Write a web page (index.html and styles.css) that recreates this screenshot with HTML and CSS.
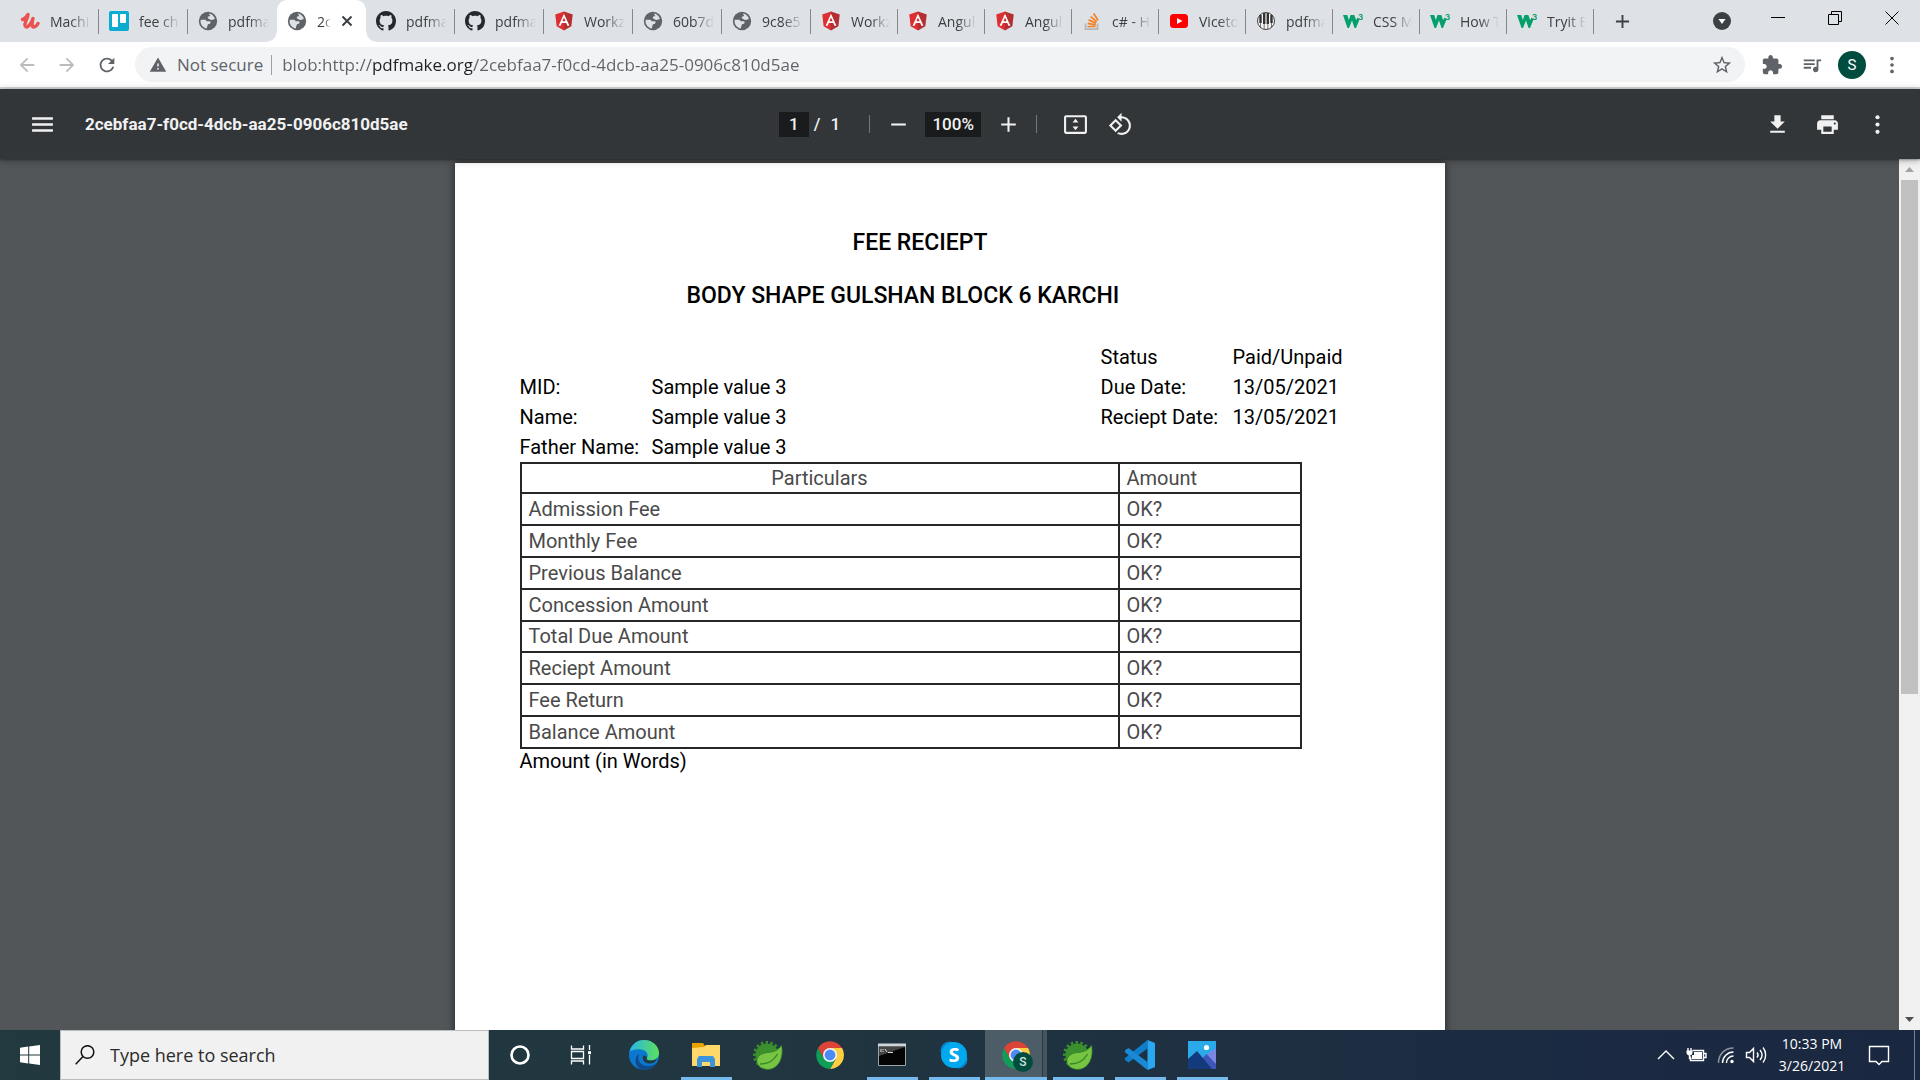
FILE: index.html
```html
<!DOCTYPE html>
<html lang="en">
<head>
<meta charset="utf-8">
<title>2cebfaa7-f0cd-4dcb-aa25-0906c810d5ae</title>
<link rel="stylesheet" href="styles.css">
</head>
<body>
<svg class="sprite" aria-hidden="true">
  <symbol id="globe" viewBox="0 0 24 24"><circle cx="12" cy="12" r="11" fill="#5f6368"/><path fill="#dee1e6" d="M3.500 10.500h5.500l1.500 1.700h3.500c1.500 0 1.500 2.300.3 3l-2.300.8-1 2.500-.5 2.500c-4.300-.8-7.500-4.500-7.500-9zM13 3.100c3.500.5 6.200 2.900 7.300 6.100l-2.300 1.300-2.500.2-3.300-1.700c-.9-.7-.6-2 .5-2.300l2-.8z"/></symbol>
  <symbol id="github" viewBox="0 0 16 16"><path fill="#24292e" d="M8 0C3.580 0 0 3.580 0 8c0 3.540 2.290 6.530 5.470 7.590.4.070.55-.17.55-.38 0-.19-.01-.82-.01-1.490-2.010.37-2.530-.49-2.690-.94-.09-.23-.48-.94-.82-1.130-.28-.15-.68-.52-.01-.53.63-.01 1.080.58 1.230.82.72 1.210 1.870.87 2.330.66.07-.52.28-.87.51-1.070-1.780-.2-3.640-.89-3.640-3.950 0-.87.31-1.590.82-2.150-.08-.2-.36-1.020.08-2.120 0 0 .67-.21 2.200.82.64-.18 1.320-.27 2-.27.68 0 1.360.09 2 .27 1.530-1.040 2.200-.82 2.200-.82.44 1.100.16 1.920.08 2.120.51.56.82 1.270.82 2.150 0 3.070-1.870 3.750-3.650 3.950.29.25.54.73.54 1.480 0 1.070-.01 1.930-.01 2.200 0 .21.15.46.55.38A8.013 8.013 0 0016 8c0-4.420-3.580-8-8-8z"/></symbol>
  <symbol id="angular" viewBox="0 0 24 24"><path fill="#dd2f31" d="M12 .5 1.500 4.300l1.700 14L12 23.500z"/><path fill="#b52e31" d="M12 .5l10.500 3.800-1.700 14L12 23.500z"/><path fill="#fff" fill-rule="evenodd" d="M12 3.200 5.500 17.800h2.500l1.300-3.300h5.400l1.300 3.300h2.500zM12 7.800l1.900 4.600h-3.800z"/></symbol>
  <symbol id="udemy" viewBox="0 0 20 20"><path fill="none" stroke="#ec5252" stroke-width="3.400" stroke-linecap="round" stroke-linejoin="round" d="M2.500 8.500C5 8 7 5 8 3.500c0 4-4 8-3 11 1.500 4 6-1 8-7-1 3-1.500 8 .5 8.500 1.700.3 3.300-1.500 4.500-3.500"/></symbol>
  <symbol id="trello" viewBox="0 0 20 20"><rect width="20" height="20" rx="2" fill="#0aadd0"/><rect x="3" y="3" width="6" height="13" rx="1" fill="#fff"/><rect x="11" y="3" width="6" height="9" rx="1" fill="#fff"/></symbol>
  <symbol id="stack" viewBox="0 0 20 20"><path fill="none" stroke="#b4b8bd" stroke-width="1.800" d="M3.500 12.500v5.700h12v-5.700"/><path fill="none" stroke="#f48024" stroke-width="1.700" d="M5.500 15.500h8M5.700 12.300l8 1.500M6.600 8.900l7.400 3.200M8.600 5.600l6.200 5M11.600 2.600l4.500 6.600"/></symbol>
  <symbol id="youtube" viewBox="0 0 20 20"><rect x="1" y="3" width="18" height="14" rx="3.500" fill="#f00"/><path fill="#fff" d="m8 7 5.500 3L8 13z"/></symbol>
  <symbol id="piano" viewBox="0 0 20 20"><circle cx="10" cy="10" r="8.500" fill="#f4f4f4" stroke="#444" stroke-width="1"/><path stroke="#333" stroke-width="2.400" d="M4.500 4v8M8.200 2v11M11.800 2v11M15.500 4v8"/><path stroke="#555" stroke-width=".8" d="M4.500 12v4M8.200 13v5M11.800 13v5M15.500 12v4"/></symbol>
  <symbol id="w3" viewBox="0 0 20 20"><path fill="#04a06c" d="M0 4h4.200l1.700 5L7.500 4h3.800l1.800 5 1.600-2.500 1.800 2-3.500 8.500h-1.500L9 9.500 6 17H4.500z"/><text x="15" y="9" font-family="Inter, sans-serif" font-size="8" font-weight="700" fill="#04a06c">3</text></symbol>
  <symbol id="back" viewBox="0 0 24 24"><path d="M20 11H7.830l5.590-5.590L12 4l-8 8 8 8 1.410-1.410L7.830 13H20v-2z"/></symbol>
  <symbol id="forward" viewBox="0 0 24 24"><path d="m12 4-1.410 1.410L16.170 11H4v2h12.170l-5.580 5.590L12 20l8-8z"/></symbol>
  <symbol id="reload" viewBox="0 0 24 24"><path d="M17.650 6.350C16.200 4.900 14.210 4 12 4c-4.420 0-7.990 3.580-7.990 8s3.570 8 7.990 8c3.730 0 6.840-2.550 7.730-6h-2.080c-.82 2.330-3.040 4-5.650 4-3.310 0-6-2.690-6-6s2.690-6 6-6c1.660 0 3.140.69 4.220 1.780L13 11h7V4l-2.350 2.350z"/></symbol>
  <symbol id="warning" viewBox="0 0 24 24"><path d="M1 21h22L12 2 1 21zm12-3h-2v-2h2v2zm0-4h-2v-4h2v4z"/></symbol>
  <symbol id="star" viewBox="0 0 24 24"><path d="M22 9.240l-7.190-.62L12 2 9.190 8.630 2 9.240l5.460 4.730L5.820 21 12 17.270 18.180 21l-1.630-7.030L22 9.240zM12 15.400l-3.760 2.270 1-4.280-3.320-2.880 4.380-.38L12 6.100l1.710 4.040 4.380.38-3.320 2.880 1 4.280L12 15.400z"/></symbol>
  <symbol id="puzzle" viewBox="0 0 24 24"><path d="M20.500 11H19V7c0-1.100-.9-2-2-2h-4V3.500C13 2.120 11.880 1 10.500 1S8 2.120 8 3.500V5H4c-1.100 0-1.990.9-1.990 2v3.800H3.500c1.490 0 2.700 1.210 2.700 2.700s-1.210 2.700-2.700 2.700H2V20c0 1.100.9 2 2 2h3.800v-1.500c0-1.490 1.210-2.700 2.700-2.700 1.490 0 2.700 1.210 2.700 2.700V22H17c1.100 0 2-.9 2-2v-4h1.500c1.380 0 2.500-1.120 2.500-2.500S21.880 11 20.500 11z"/></symbol>
  <symbol id="queue" viewBox="0 0 24 24"><path d="M15 6H3v2h12V6zm0 4H3v2h12v-2zM3 16h8v-2H3v2zM17 6v8.180c-.31-.11-.65-.18-1-.18-1.660 0-3 1.340-3 3s1.340 3 3 3 3-1.340 3-3V8h3V6h-5z"/></symbol>
  <symbol id="more" viewBox="0 0 24 24"><circle cx="12" cy="5" r="2"/><circle cx="12" cy="12" r="2"/><circle cx="12" cy="19" r="2"/></symbol>
  <symbol id="menu" viewBox="0 0 24 24"><path d="M2 19h20v-2.400H2zm0-5.800h20v-2.400H2zM2 5v2.400h20V5z"/></symbol>
  <symbol id="plus" viewBox="0 0 24 24"><path d="M19 13h-6v6h-2v-6H5v-2h6V5h2v6h6z"/></symbol>
  <symbol id="minus" viewBox="0 0 24 24"><path d="M5 11h14v2H5z"/></symbol>
  <symbol id="fit" viewBox="0 0 24 24"><path fill-rule="evenodd" d="M3 3h18c1.100 0 2 .9 2 2v14c0 1.100-.9 2-2 2H3c-1.100 0-2-.9-2-2V5c0-1.100.9-2 2-2zm0 2v14h18V5zM12 6.500 9.200 10h5.600zM12 17.500 9.200 14h5.600z"/></symbol>
  <symbol id="rotate" viewBox="0 0 24 24"><path d="M7.340 6.410.86 12.900l6.490 6.480 6.490-6.480-6.500-6.490zM3.690 12.900l3.660-3.660L11 12.900l-3.660 3.660-3.650-3.660zm15.670-6.260C17.610 4.880 15.300 4 13 4V.76L8.760 5 13 9.240V6c1.790 0 3.580.68 4.950 2.050 2.730 2.730 2.730 7.170 0 9.900C16.580 19.320 14.790 20 13 20c-.97 0-1.940-.21-2.840-.61l-1.490 1.490C10.020 21.620 11.510 22 13 22c2.300 0 4.610-.88 6.360-2.640 3.520-3.510 3.520-9.210 0-12.720z"/></symbol>
  <symbol id="download" viewBox="0 0 24 24"><path d="M19 9h-4V3H9v6H5l7 7 7-7zM5 18v2h14v-2H5z"/></symbol>
  <symbol id="print" viewBox="0 0 24 24"><path d="M19 8H5c-1.660 0-3 1.340-3 3v6h4v4h12v-4h4v-6c0-1.660-1.340-3-3-3zm-3 11H8v-5h8v5zm3-7c-.55 0-1-.45-1-1s.45-1 1-1 1 .45 1 1-.45 1-1 1zm-1-9H6v4h12V3z"/></symbol>
  <symbol id="chrome" viewBox="0 0 28 28"><path fill="#ffcd40" d="M14 7h12.100A14 14 0 0 1 14 28l6-10.500z"/><path fill="#0f9d58" d="M2 7.100A14 14 0 0 0 14 28l6-10.500-12 0z"/><path fill="#db4437" d="M2 7.100 8 17.500 14 7h12A14 14 0 0 0 2 7.100z"/><circle cx="14" cy="14" r="7" fill="#f4f4f4"/><circle cx="14" cy="14" r="5.400" fill="#4c8bf5"/></symbol>
  <symbol id="spring" viewBox="0 0 30 30"><circle cx="14" cy="15" r="11.500" fill="#3b8f2c"/><circle cx="14" cy="15" r="12.600" fill="none" stroke="#3b8f2c" stroke-width="3" stroke-dasharray="2.400 2.400"/><path fill="#76c442" stroke="#2c7a25" stroke-width=".7" d="M28.500 5c2 9-.5 20-9 23.500-6.500 2.500-14-.5-15.500-6-1-5.500 3.500-9.500 11-10 6-.3 11-2.500 13.500-7.500z"/><path fill="none" stroke="#35862a" stroke-width="1.300" d="M7 24c8 0 14-3.500 17.500-10"/></symbol>
</svg>

<header class="browser">
  <nav class="tabs" aria-label="Tabs">
    <a class="tab" href="#"><svg class="fav"><use href="#udemy"/></svg><span>Machi</span></a>
    <a class="tab" href="#"><svg class="fav"><use href="#trello"/></svg><span>fee ch</span></a>
    <a class="tab before" href="#"><svg class="fav"><use href="#globe"/></svg><span>pdfma</span></a>
    <div class="tab active"><svg class="fav"><use href="#globe"/></svg><span>2c</span><button class="close" aria-label="Close tab"><svg viewBox="0 0 12 12"><path d="m1.500 1.500 9 9m0-9-9 9"/></svg></button></div>
    <a class="tab" href="#"><svg class="fav"><use href="#github"/></svg><span>pdfma</span></a>
    <a class="tab" href="#"><svg class="fav"><use href="#github"/></svg><span>pdfma</span></a>
    <a class="tab" href="#"><svg class="fav"><use href="#angular"/></svg><span>Workz</span></a>
    <a class="tab" href="#"><svg class="fav"><use href="#globe"/></svg><span>60b7d</span></a>
    <a class="tab" href="#"><svg class="fav"><use href="#globe"/></svg><span>9c8e5</span></a>
    <a class="tab" href="#"><svg class="fav"><use href="#angular"/></svg><span>Workz</span></a>
    <a class="tab" href="#"><svg class="fav"><use href="#angular"/></svg><span>Angul</span></a>
    <a class="tab" href="#"><svg class="fav"><use href="#angular"/></svg><span>Angul</span></a>
    <a class="tab" href="#"><svg class="fav"><use href="#stack"/></svg><span>c# - H</span></a>
    <a class="tab" href="#"><svg class="fav"><use href="#youtube"/></svg><span>Viceto</span></a>
    <a class="tab" href="#"><svg class="fav"><use href="#piano"/></svg><span>pdfma</span></a>
    <a class="tab" href="#"><svg class="fav"><use href="#w3"/></svg><span>CSS M</span></a>
    <a class="tab" href="#"><svg class="fav"><use href="#w3"/></svg><span>How T</span></a>
    <a class="tab" href="#"><svg class="fav"><use href="#w3"/></svg><span>Tryit E</span></a>
    <button class="new-tab" aria-label="New tab"><svg viewBox="0 0 16 16"><path d="M8 1v14M1 8h14"/></svg></button>
    <div class="window">
      <button class="tab-search" aria-label="Search tabs"><svg viewBox="0 0 18 18"><circle cx="9" cy="9" r="9" fill="#3c4043"/><path fill="#fff" d="M5.500 7h7L9 12z"/></svg></button>
      <button aria-label="Minimize"><svg viewBox="0 0 14 14"><path d="M0 6.500h14"/></svg></button>
      <button aria-label="Restore"><svg viewBox="0 0 14 14"><path d="M.5 3.500h10v10H.5zM3.500 3.500v-3h10v10h-3"/></svg></button>
      <button aria-label="Close"><svg viewBox="0 0 14 14"><path d="m.5.5 13 13m0-13-13 13"/></svg></button>
    </div>
  </nav>
  <div class="toolbar">
    <button class="tool faded" aria-label="Back"><svg><use href="#back"/></svg></button>
    <button class="tool faded" aria-label="Forward"><svg><use href="#forward"/></svg></button>
    <button class="tool" aria-label="Reload"><svg><use href="#reload"/></svg></button>
    <div class="omnibox">
      <svg class="warn"><use href="#warning"/></svg>
      <label for="url">Not secure</label>
      <input id="url" type="text" value="blob:http://pdfmake.org/2cebfaa7-f0cd-4dcb-aa25-0906c810d5ae">
      <button class="tool" aria-label="Bookmark"><svg><use href="#star"/></svg></button>
    </div>
    <button class="tool" aria-label="Extensions"><svg><use href="#puzzle"/></svg></button>
    <button class="tool queue" aria-label="Media"><svg><use href="#queue"/></svg></button>
    <button class="tool" aria-label="Profile"><span class="avatar">S</span></button>
    <button class="tool" aria-label="Menu"><svg><use href="#more"/></svg></button>
  </div>
</header>

<main class="viewer">
  <div class="pdf-bar">
    <div class="pdf-name">
      <button aria-label="Sidebar"><svg><use href="#menu"/></svg></button>
      <h1>2cebfaa7-f0cd-4dcb-aa25-0906c810d5ae</h1>
    </div>
    <div class="pdf-controls">
      <input class="page-no" type="text" value="1" aria-label="Page">
      <span class="slash">/</span><span class="total">1</span>
      <i></i>
      <button aria-label="Zoom out"><svg><use href="#minus"/></svg></button>
      <input class="zoom" type="text" value="100%" aria-label="Zoom">
      <button aria-label="Zoom in"><svg><use href="#plus"/></svg></button>
      <i></i>
      <button class="fit" aria-label="Fit to page"><svg><use href="#fit"/></svg></button>
      <button aria-label="Rotate"><svg><use href="#rotate"/></svg></button>
    </div>
    <div class="pdf-actions">
      <button aria-label="Download"><svg><use href="#download"/></svg></button>
      <button aria-label="Print"><svg><use href="#print"/></svg></button>
      <button aria-label="More"><svg><use href="#more"/></svg></button>
    </div>
  </div>
  <div class="pdf-body">
    <div class="pages">
      <article class="page">
        <h2 class="title">FEE RECIEPT</h2>
        <h2 class="branch">BODY SHAPE GULSHAN BLOCK 6 KARCHI</h2>
        <div class="details">
          <dl class="member">
            <dt>MID:</dt><dd>Sample value 3</dd>
            <dt>Name:</dt><dd>Sample value 3</dd>
            <dt>Father Name:</dt><dd>Sample value 3</dd>
          </dl>
          <dl>
            <dt>Status</dt><dd>Paid/Unpaid</dd>
            <dt>Due Date:</dt><dd>13/05/2021</dd>
            <dt>Reciept Date:</dt><dd>13/05/2021</dd>
          </dl>
        </div>
        <table>
          <thead><tr><th class="particulars">Particulars</th><th>Amount</th></tr></thead>
          <tbody>
            <tr><td>Admission Fee</td><td>OK?</td></tr>
            <tr><td>Monthly Fee</td><td>OK?</td></tr>
            <tr><td>Previous Balance</td><td>OK?</td></tr>
            <tr><td>Concession Amount</td><td>OK?</td></tr>
            <tr><td>Total Due Amount</td><td>OK?</td></tr>
            <tr><td>Reciept Amount</td><td>OK?</td></tr>
            <tr><td>Fee Return</td><td>OK?</td></tr>
            <tr><td>Balance Amount</td><td>OK?</td></tr>
          </tbody>
        </table>
        <p>Amount (in Words)</p>
      </article>
    </div>
    <div class="scrollbar">
      <svg viewBox="0 0 21 21"><path fill="#a3a3a3" d="M6 13h9l-4.500-5z"/></svg>
      <div class="track"><div class="thumb"></div></div>
      <svg viewBox="0 0 21 21"><path fill="#505050" d="M6 8h9l-4.500 5z"/></svg>
    </div>
  </div>
</main>

<footer class="taskbar">
  <button class="start" aria-label="Start"><svg viewBox="0 0 20 20"><path fill="#fff" d="M0 2.700 8.200 1.600v7.900H0zM9.200 1.500 20 0v9.500H9.200zM0 10.500h8.200v7.900L0 17.300zM9.200 10.500H20V20L9.200 18.500z"/></svg></button>
  <div class="search">
    <svg viewBox="0 0 20 20"><circle cx="12.500" cy="7" r="6.300"/><path d="M8 11.500.7 19.300"/></svg>
    <input type="text" placeholder="Type here to search" aria-label="Type here to search">
  </div>
  <div class="apps">
    <button aria-label="Cortana"><svg viewBox="0 0 30 30"><circle cx="15" cy="15" r="8.500" fill="none" stroke="#fff" stroke-width="2.600"/></svg></button>
    <button aria-label="Task view"><svg viewBox="0 0 30 30"><path fill="none" stroke="#fff" stroke-width="1.300" d="M4.500 5.500v3.500h12V5.500M4.500 24.500V21h12v3.500M4.500 11.500h12v7h-12zM22.500 5v5M22.500 15v9.500"/><path fill="#fff" d="M21 11.200h3v3h-3z"/></svg></button>
    <button aria-label="Edge"><svg viewBox="0 0 30 30"><defs><linearGradient id="eg" x1="0" x2="1"><stop offset="0" stop-color="#2ab4e8"/><stop offset="1" stop-color="#5be05a"/></linearGradient></defs><circle cx="15" cy="15" r="15" fill="#0b78d0"/><path fill="url(#eg)" d="M.5 12C2 4.500 8 0 15 0c9 0 15 6.500 15 13 0 5-4 7.500-8.500 7.500-3 0-4.500-1.200-3.500-2.500 2-3-.5-8-6-8.500C7 9 2.500 10 .5 12z"/><path fill="#114a8b" d="M10 14c-2.500 6 1.500 12 9 12 3.500 0 6-1 8.500-3C24 28 19 30 15 30 10 30 6 25 6.500 20c.3-3 1.500-5 3.500-6z"/><path fill="#213a42" d="M18 18c-1 1.300.5 2.500 3.500 2.500 3 0 5-1 6.500-2.300-1 4-4 5.300-8 5.300-5 0-7-4-6-8 1.500 0 4 .8 4 2.500z"/></svg></button>
    <button class="open" aria-label="File Explorer"><svg viewBox="0 0 30 30"><path fill="#e8a202" d="M1 3h11l2 3v4H1z"/><path fill="#ffd869" d="M1 8l12-1 2-2h14v21H1z"/><path fill="#3b94dc" d="M6 27V19l2-3h14l2 3v8h-5v-5h-8v5z"/></svg></button>
    <button aria-label="Spring Tool Suite"><svg><use href="#spring"/></svg></button>
    <button aria-label="Chrome"><svg class="small"><use href="#chrome"/></svg></button>
    <button class="open" aria-label="Command Prompt"><svg viewBox="0 0 30 30"><path fill="#050505" stroke="#9aa3a8" d="M1.500 4.500h27v21h-27z"/><path fill="#cfd4d8" d="M1 3.500h28v3H1z"/><path fill="#444" d="M2 7h26l-26 9z"/><path fill="none" stroke="#ddd" d="M4 9v3M6 9v1M6 11v1M8 9l2 3M11 12.500h5"/></svg></button>
    <button class="open" aria-label="Skype"><svg viewBox="0 0 30 30"><circle cx="10.500" cy="10.500" r="9" fill="#0a84d0"/><circle cx="19.500" cy="19.500" r="9" fill="#0a84d0"/><circle cx="15" cy="15" r="13" fill="#00a9ee"/><text class="skype-s" x="15" y="22" text-anchor="middle">S</text></svg></button>
    <button class="open current" aria-label="Chrome, S"><svg class="small"><use href="#chrome"/></svg><span class="badge">S</span></button>
    <button class="open" aria-label="Spring Tool Suite"><svg><use href="#spring"/></svg></button>
    <button class="open" aria-label="Visual Studio Code"><svg viewBox="0 0 30 30"><path fill="#0f7dc8" d="M22.500 0 22.500 8.500 3.500 22.500 0 20v-2z"/><path fill="#1a8ad6" d="M3.500 8 0 10.200v2L22.500 30v-8z"/><path fill="#2aa7f3" d="M22.500 0 30 3v24l-7.500 3z"/></svg></button>
    <button class="open" aria-label="Photos"><svg viewBox="0 0 30 30"><path fill="#2aaae8" d="M1 1h28v28H1z"/><path fill="#7b87e0" d="M29 8v21L17 17z"/><path fill="#3d57b8" d="m12 22 7.500-8L29 24v5H12z"/><path fill="#123a7c" d="M1 19 10 11l15 18H1z"/><circle cx="19.500" cy="7.500" r="2.600" fill="#fff"/></svg></button>
  </div>
  <div class="tray">
    <button aria-label="Hidden icons"><svg viewBox="0 0 22 22"><path d="m3 15 8-8 8 8"/></svg></button>
    <button aria-label="Battery"><svg viewBox="0 0 22 22"><path d="M7.500 6.500h11v10h-13v-4M19 9.500h2v4h-2M3 4v3M6 4v3M4.500 11v3.500h2"/><path fill="#fff" stroke="none" d="M9 8h8v7H7v-4h2zM1.500 6.500h6v2c0 4-6 4-6 0z"/></svg></button>
    <button aria-label="Network"><svg viewBox="0 0 22 22"><path opacity=".5" d="M3.500 19C3.500 10 10 4 18.500 4"/><path d="M7.500 19c0-6 5-11 11-11M11.500 19c0-4 3-7 7-7"/><circle cx="17" cy="17.500" r="1.700" fill="#fff" stroke="none"/></svg></button>
    <button aria-label="Volume"><svg viewBox="0 0 22 22"><path d="M1.500 8.500h3l4-4v13l-4-4h-3zM12 8.500c1.300 1.500 1.300 3.500 0 5M15 6c2.500 3 2.500 7 0 10M18 3.500c3.500 4 3.500 11 0 15"/></svg></button>
    <div class="clock"><time>10:33 PM</time><time>3/26/2021</time></div>
    <button class="notes" aria-label="Notifications"><svg viewBox="0 0 22 22"><path d="M1.500 2.500h19v15H14l-3 3-3-3H1.500z"/></svg></button>
    <i class="desktop"></i>
  </div>
</footer>
</body>
</html>
```
FILE: styles.css
```css
* { box-sizing: border-box; }

body {
  margin: 0;
  height: 100vh;
  display: flex;
  flex-direction: column;
  overflow: hidden;
  font-family: "Open Sans", "Noto Sans", sans-serif;
}

h1, h2, p, dl, dd { margin: 0; }
a { color: inherit; text-decoration: none; }

button {
  display: flex;
  align-items: center;
  justify-content: center;
  padding: 0;
  border: 0;
  background: none;
  color: inherit;
  font: inherit;
}

input {
  min-width: 0;
  padding: 0;
  border: 0;
  outline: 0;
  background: none;
  color: inherit;
  font: inherit;
}

svg { display: block; flex: none; fill: currentColor; }
.sprite { position: absolute; width: 0; height: 0; }

/* Tab strip */
.tabs {
  display: flex;
  height: 42px;
  padding-left: 10px;
  background: #dee1e6;
  color: #3c4043;
  font-size: 14px;
}

.tab {
  display: flex;
  align-items: center;
  gap: 10px;
  flex: 0 1 87px;
  min-width: 0;
  padding: 0 8px 0 10px;
  background: linear-gradient(#85888d, #85888d) right 9px / 1px 25px no-repeat;
}
.tab:nth-child(-n+9) { flex-basis: 89px; }

.tab.before { background: none; }
.tab span {
  flex: 1;
  min-width: 0;
  overflow: hidden;
  white-space: nowrap;
  mask-image: linear-gradient(90deg, #000 50%, transparent);
}
.fav { width: 20px; height: 20px; }

.tab.active {
  position: relative;
  padding-right: 13px;
  background: #fff;
  border-radius: 10px 10px 0 0;
}
.tab.active::before,
.tab.active::after {
  content: "";
  position: absolute;
  bottom: 0;
  width: 10px;
  height: 10px;
}
.tab.active::before { left: -10px; background: radial-gradient(circle at 0 0, transparent 9px, #fff 10px); }
.tab.active::after { right: -10px; background: radial-gradient(circle at 100% 0, transparent 9px, #fff 10px); }
.close svg { width: 12px; height: 12px; stroke: #3c4043; stroke-width: 2; }

.new-tab { width: 57px; }
.new-tab svg { width: 15px; height: 15px; stroke: #3c4043; stroke-width: 2; }

.window { display: flex; margin-left: auto; color: #000; }
.window button { width: 57px; height: 36px; }
.window svg { width: 14px; height: 14px; fill: none; stroke: #000; stroke-width: 1; }
.window .tab-search { width: 40px; height: 42px; margin-right: 7px; }
.window .tab-search svg { width: 18px; height: 18px; stroke: none; }

/* Address bar */
.toolbar {
  display: flex;
  align-items: center;
  height: 47px;
  padding: 0 8px 0 7px;
  border-bottom: 2px solid #d5d7da;
  background: #fff;
  color: #5f6368;
}
.tool { width: 40px; height: 35px; }
.tool svg { width: 22px; height: 22px; }
.faded { color: #babcbe; }

.omnibox {
  display: flex;
  align-items: center;
  flex: 1;
  height: 35px;
  margin: 0 7px 0 8px;
  padding: 0 3px 0 14px;
  border-radius: 18px;
  background: #f1f3f4;
  font-size: 17px;
}
.warn { width: 18px; height: 18px; margin-right: 10px; }
.omnibox label { padding-right: 8px; border-right: 1px solid #9aa0a6; line-height: 20px; }
.omnibox input {
  flex: 1;
  height: 35px;
  margin-left: 10px;
  background: linear-gradient(90deg, #5f6368 90px, #202124 90px 190px, #5f6368 190px);
  background-clip: text;
  -webkit-background-clip: text;
  -webkit-text-fill-color: transparent;
}
.avatar {
  width: 28px;
  height: 28px;
  border-radius: 50%;
  background: #004d40;
  color: #fff;
  font: 15px/28px Roboto, sans-serif;
}

/* PDF viewer */
.viewer {
  display: flex;
  flex-direction: column;
  flex: 1;
  min-height: 0;
  background: #525659;
  font-family: Roboto, sans-serif;
}

.pdf-bar {
  position: relative;
  display: grid;
  grid-template-columns: 1fr auto 1fr;
  align-items: center;
  height: 70px;
  padding: 0 23px 0 22px;
  background: #323639;
  box-shadow: 0 -2px 8px rgba(0, 0, 0, .09), 0 4px 8px rgba(0, 0, 0, .06), 0 1px 2px rgba(0, 0, 0, .3), 0 2px 6px rgba(0, 0, 0, .15);
  color: #f1f1f1;
  font-size: 17px;
  font-weight: 500;
}
.pdf-bar button { width: 40px; height: 40px; }
.pdf-bar svg { width: 25px; height: 25px; }
.pdf-name { display: flex; align-items: center; gap: 23px; }
.pdf-name h1 { font-size: 17px; font-weight: 700; white-space: nowrap; }

.pdf-controls { display: flex; align-items: center; }
.pdf-controls input { height: 25px; background: #191b1c; text-align: center; }
.page-no { width: 30px; }
.slash { margin-left: 5px; }
.total { margin: 0 29px 0 10px; }
.pdf-controls i { width: 1px; height: 18px; background: #70777d; }
.pdf-controls i + button { margin-left: 8px; }
.zoom { width: 56px; margin: 0 7px; }
.zoom + button { margin-right: 8px; }
.pdf-controls i + .fit { margin-left: 18px; }
.fit { margin-right: 5px; }
.pdf-actions { display: flex; justify-content: flex-end; gap: 10px; }

.pdf-body { display: flex; flex: 1; min-height: 0; }
.pages { flex: 1; padding-top: 4px; overflow: hidden; }

.page {
  max-width: 990px;
  min-height: 1400px;
  margin: 0 auto;
  padding: 66px 65px;
  background: #fff;
  box-shadow: 0 0 8px rgba(0, 0, 0, .6);
  color: #000;
  font-size: 20px;
  line-height: 30px;
}
.page h2 { font-size: 23px; font-weight: 500; line-height: 28px; }
.title { padding-left: 333px; }
.branch { margin: 25px 0 32px; padding-left: 167px; }

.details { display: grid; grid-template-columns: 581px 1fr; }
.details dl { display: grid; grid-template-columns: 132px 1fr; align-content: start; white-space: nowrap; }
.details .member { padding-top: 30px; }

table {
  width: 782px;
  height: 287px;
  border-collapse: collapse;
  color: #4a4a4a;
  line-height: 28px;
}
th, td {
  padding: 0 7px;
  border: 2px solid #262626;
  text-align: left;
  font-weight: 400;
}
th { width: 182px; }
.particulars { width: auto; text-align: center; }
.page p { line-height: 24px; }

.scrollbar {
  display: flex;
  flex-direction: column;
  width: 21px;
  background: #f1f1f1;
}
.scrollbar svg { width: 21px; height: 21px; }
.track { flex: 1; padding: 0 2px; }
.thumb { height: 62%; background: #c1c1c1; }

/* Taskbar */
.taskbar {
  display: flex;
  height: 50px;
  background: linear-gradient(90deg, #22393f, #213640 40%, #1b2b42 80%, #1a2740);
  color: #fff;
}
.start { width: 60px; }
.start svg { width: 20px; height: 20px; }

.search {
  display: flex;
  align-items: center;
  gap: 15px;
  flex: 0 1 429px;
  padding: 0 14px;
  border: 1px solid #b8bcbd;
  background: #f1f1f1;
  color: #2b2b2b;
  font-size: 18px;
}
.search svg { width: 20px; height: 20px; fill: none; stroke: #111; stroke-width: 1.5; }
.search input { flex: 1; }
.search input::placeholder { color: #2b2b2b; opacity: 1; }

.apps { display: flex; }
.apps button { position: relative; width: 62px; }
.apps svg { width: 30px; height: 30px; }
.apps svg.small { width: 28px; height: 28px; }
.apps .open { background: linear-gradient(#76b9ed, #76b9ed) center bottom / 51px 3px no-repeat; }
.apps .current {
  background:
    linear-gradient(#76b9ed, #76b9ed) center bottom / 62px 3px no-repeat,
    linear-gradient(90deg, #4d5d67 57px, #2b3a42 57px 58px, #46545d 58px);
}
.badge {
  position: absolute;
  top: 22px;
  right: 14px;
  width: 20px;
  height: 20px;
  border-radius: 50%;
  background: #004d40;
  color: #cfe3df;
  font: 500 12px/20px Roboto, sans-serif;
}
.skype-s { fill: #fff; font: 700 20px "Open Sans", sans-serif; }

.tray { display: flex; align-items: center; margin-left: auto; }
.tray button { width: 30px; height: 50px; }
.tray svg { width: 22px; height: 22px; fill: none; stroke: #fff; stroke-width: 1.4; }
.clock {
  display: flex;
  flex-direction: column;
  width: 82px;
  text-align: center;
  font-size: 14px;
  line-height: 22px;
}
.tray .notes { width: 52px; margin-right: 9px; }
.desktop { width: 1px; height: 50px; margin-right: 5px; background: #76808e; }
```
